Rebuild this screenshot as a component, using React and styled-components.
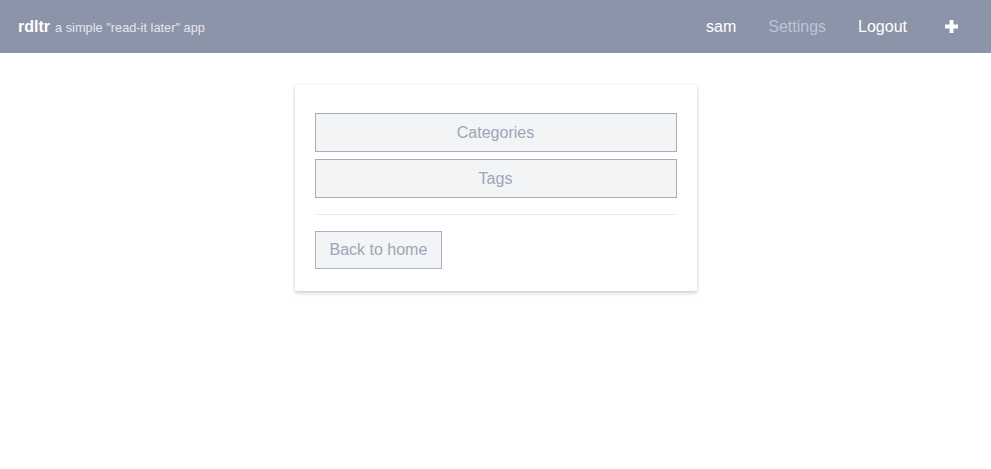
import React from 'react';
import styled, { createGlobalStyle } from 'styled-components';

const GlobalStyle = createGlobalStyle`
  body {
    margin: 0;
    background-color: #ffffff;
    font-family: 'Liberation Sans', Arial, sans-serif;
  }
`;

const Header = styled.header`
  display: flex;
  align-items: center;
  justify-content: space-between;
  height: 53px;
  padding: 0 33px 0 18px;
  background-color: #8c94a9;
`;

const Brand = styled.div`
  display: flex;
  align-items: baseline;
`;

const Logo = styled.span`
  font-size: 16px;
  font-weight: bold;
  color: #ffffff;
`;

const Tagline = styled.span`
  margin-left: 5px;
  font-size: 12.8px;
  color: #e4e7ee;
`;

const Nav = styled.nav`
  display: flex;
  align-items: center;
  gap: 32px;
`;

const NavLink = styled.a`
  font-size: 16px;
  color: ${(p) => (p.active ? '#b9c4d6' : '#ffffff')};
  text-decoration: none;
  cursor: pointer;
`;

const AddButton = styled.button`
  display: flex;
  align-items: center;
  justify-content: center;
  margin-left: 6px;
  padding: 0;
  background: transparent;
  border: none;
  cursor: pointer;
`;

const Main = styled.main`
  display: flex;
  justify-content: center;
  min-height: 416px;
  padding-top: 32px;
  box-sizing: border-box;
`;

const Card = styled.section`
  align-self: flex-start;
  width: 362px;
  padding: 28px 20px 22px;
  background-color: #ffffff;
  box-shadow: 0 2px 4px rgba(0, 0, 0, 0.18), 0 0 2px rgba(0, 0, 0, 0.08);
`;

const List = styled.div`
  display: flex;
  flex-direction: column;
  gap: 7px;
`;

const Button = styled.button`
  box-sizing: border-box;
  width: ${(p) => (p.block ? '100%' : 'auto')};
  height: ${(p) => (p.block ? '39px' : '38px')};
  padding: 0 14px;
  background-color: #f3f4f6;
  border: 1px solid ${(p) => (p.block ? '#a9adbb' : '#a9afc4')};
  color: #9ea5b8;
  font-family: 'Liberation Sans', Arial, sans-serif;
  font-size: 16px;
  cursor: pointer;
  &:focus {
    outline: none;
  }
`;

const Divider = styled.hr`
  margin: 16px 0;
  border: none;
  border-top: 1px solid #ececee;
`;

const PlusIcon = () => (
  <svg width="13" height="13" viewBox="0 0 13 13">
    <path d="M4.6 0h3.8v4.6H13v3.8H8.4V13H4.6V8.4H0V4.6h4.6z" fill="#ffffff" />
  </svg>
);

const App = () => {
  return (
    <>
      <GlobalStyle />
      <Header>
        <Brand>
          <Logo>rdltr</Logo>
          <Tagline>a simple "read-it later" app</Tagline>
        </Brand>
        <Nav>
          <NavLink>sam</NavLink>
          <NavLink active>Settings</NavLink>
          <NavLink>Logout</NavLink>
          <AddButton aria-label="add">
            <PlusIcon />
          </AddButton>
        </Nav>
      </Header>

      <Main>
        <Card>
          <List>
            <Button block>Categories</Button>
            <Button block>Tags</Button>
          </List>
          <Divider />
          <Button>Back to home</Button>
        </Card>
      </Main>
    </>
  );
};

export default App;
